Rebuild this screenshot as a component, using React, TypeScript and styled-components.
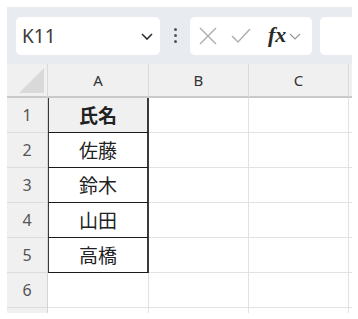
import styled, { createGlobalStyle } from "styled-components";

const Global = createGlobalStyle`
    body {
        margin: 0;
        background: #ffffff;
        font-family: "Noto Sans", "Noto Sans CJK JP", sans-serif;
    }
`;

const Frame = styled.div`
    margin: 7px 6px 0 7px;
    width: 345px;
    height: 306px;
    background: #e8ebef;
    overflow: hidden;
`;

const Toolbar = styled.div`
    display: flex;
    align-items: center;
    height: 57px;
    padding-left: 9px;
    box-sizing: border-box;
`;

const Box = styled.div<{ w: number; gapLeft?: number }>`
    display: flex;
    align-items: center;
    flex-shrink: 0;
    width: ${p => p.w}px;
    height: 38px;
    margin-left: ${p => p.gapLeft ?? 0}px;
    background: #ffffff;
    border-radius: 5px;
    box-sizing: border-box;
`;

const NameText = styled.span`
    flex: 1;
    padding-left: 6px;
    font-size: 19px;
    color: #3a3a3a;
`;

const Dots = styled.div`
    display: flex;
    flex-direction: column;
    flex-shrink: 0;
    gap: 3px;
    width: 30px;
    align-items: center;
    span {
        width: 3px;
        height: 3px;
        border-radius: 50%;
        background: #555;
    }
`;

const Fx = styled.span`
    font-family: "Liberation Serif", "DejaVu Serif", serif;
    font-style: italic;
    font-weight: bold;
    font-size: 22px;
    color: #2a2a2a;
    margin: -2px 3px 0 17px;
`;

const Grid = styled.div`
    display: grid;
    grid-template-columns: 41px 101px 100px 100px 20px;
    grid-template-rows: 34px repeat(7, 35px);
`;

const Corner = styled.div`
    background: #f0f0f0;
    border-right: 1px solid #dadada;
    border-bottom: 2px solid #c9c9c9;
    display: flex;
    align-items: flex-end;
    justify-content: flex-end;
    padding: 0 3px 3px 0;
`;

const ColHead = styled.div`
    background: #f0f0f0;
    border-right: 1px solid #dadada;
    border-bottom: 2px solid #c9c9c9;
    display: flex;
    align-items: center;
    justify-content: center;
    font-size: 15px;
    color: #333;
`;

const RowHead = styled.div`
    background: #f0f0f0;
    border-right: 1px solid #d4d4d4;
    border-bottom: 1px solid #dcdcdc;
    display: flex;
    align-items: center;
    justify-content: center;
    font-size: 16px;
    color: #555;
`;

const Cell = styled.div<{ framed?: boolean; head?: boolean }>`
    background: ${p => (p.head ? "#f0f0f0" : "#ffffff")};
    border-right: ${p => (p.framed ? "2px solid #3a3a3a" : "1px solid #e2e2e2")};
    border-bottom: ${p => (p.framed ? "1px solid #1a1a1a" : "1px solid #e2e2e2")};
    border-left: ${p => (p.framed ? "1px solid #3a3a3a" : "none")};
    display: flex;
    align-items: center;
    justify-content: center;
    font-size: 19px;
    font-weight: ${p => (p.head ? 700 : 400)};
    color: #222;
    box-sizing: border-box;
`;

const names = ["氏名", "佐藤", "鈴木", "山田", "高橋", "", ""];

export default function App() {
    return (
        <>
            <Global />
            <Frame>
                <Toolbar>
                    <Box w={144}>
                        <NameText>K11</NameText>
                        <svg width="14" height="10" viewBox="0 0 14 10" style={{ marginRight: 6 }}>
                            <path d="M2 3 L7 8 L12 3" fill="none" stroke="#333" strokeWidth="1.6" />
                        </svg>
                    </Box>
                    <Dots>
                        <span />
                        <span />
                        <span />
                    </Dots>
                    <Box w={122}>
                        <svg width="18" height="18" viewBox="0 0 18 18" style={{ marginLeft: 9 }}>
                            <path d="M1 1 L17 17 M17 1 L1 17" stroke="#b0b0b0" strokeWidth="1.5" />
                        </svg>
                        <svg width="20" height="16" viewBox="0 0 20 16" style={{ marginLeft: 14 }}>
                            <path d="M1 8 L7 14 L19 1" fill="none" stroke="#b0b0b0" strokeWidth="1.5" />
                        </svg>
                        <Fx>fx</Fx>
                        <svg width="12" height="8" viewBox="0 0 12 8">
                            <path d="M1 2 L6 7 L11 2" fill="none" stroke="#999" strokeWidth="1.2" />
                        </svg>
                    </Box>
                    <Box w={60} gapLeft={8} />
                </Toolbar>
                <Grid>
                    <Corner>
                        <svg width="25" height="25" viewBox="0 0 25 25">
                            <path d="M25 0 L25 25 L0 25 Z" fill="#d9d9d9" />
                        </svg>
                    </Corner>
                    <ColHead>A</ColHead>
                    <ColHead>B</ColHead>
                    <ColHead>C</ColHead>
                    <ColHead />
                    {names.map((n, i) => (
                        <Row key={i} index={i} name={n} />
                    ))}
                </Grid>
            </Frame>
        </>
    );
}

function Row({ index, name }: { index: number; name: string }) {
    const framed = index < 5;
    return (
        <>
            <RowHead>{index < 6 ? index + 1 : ""}</RowHead>
            <Cell framed={framed} head={index === 0}>{name}</Cell>
            <Cell />
            <Cell />
            <Cell />
        </>
    );
}
